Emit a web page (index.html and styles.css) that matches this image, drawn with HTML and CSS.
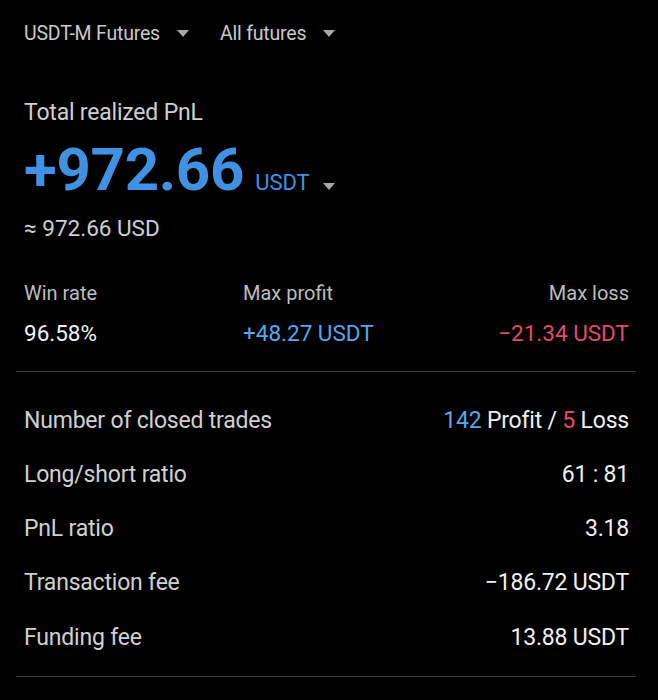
FILE: index.html
```html
<!DOCTYPE html>
<html lang="en">
<head>
<meta charset="utf-8">
<title>PnL Analysis</title>
<link rel="stylesheet" href="styles.css">
</head>
<body>
<div class="page">
  <div class="filters">
    <div class="filter">USDT-M Futures <span class="caret"></span></div>
    <div class="filter">All futures <span class="caret"></span></div>
  </div>

  <section class="summary">
    <div class="summary-title">Total realized PnL</div>
    <div class="pnl">
      <span class="pnl-value">+972.66</span>
      <span class="pnl-unit">USDT</span>
      <span class="caret caret-unit"></span>
    </div>
    <div class="pnl-usd">≈ 972.66 USD</div>
  </section>

  <section class="stats">
    <div class="stat">
      <div class="stat-label">Win rate</div>
      <div class="stat-value">96.58%</div>
    </div>
    <div class="stat">
      <div class="stat-label">Max profit</div>
      <div class="stat-value up">+48.27 USDT</div>
    </div>
    <div class="stat stat-right">
      <div class="stat-label">Max loss</div>
      <div class="stat-value down">−21.34 USDT</div>
    </div>
  </section>

  <section class="details">
    <div class="row"><span class="row-label">Number of closed trades</span><span class="row-value"><span class="up">142</span> Profit / <span class="down">5</span> Loss</span></div>
    <div class="row"><span class="row-label">Long/short ratio</span><span class="row-value">61 : 81</span></div>
    <div class="row"><span class="row-label">PnL ratio</span><span class="row-value">3.18</span></div>
    <div class="row"><span class="row-label">Transaction fee</span><span class="row-value">−186.72 USDT</span></div>
    <div class="row"><span class="row-label">Funding fee</span><span class="row-value">13.88 USDT</span></div>
  </section>
</div>
</body>
</html>
```

FILE: styles.css
```css
html, body {
  margin: 0;
  padding: 0;
  background: #000;
}

body {
  font-family: Roboto, "Noto Sans", "Liberation Sans", sans-serif;
  color: #d8d8d8;
  width: 658px;
  height: 700px;
  overflow: hidden;
}

.page {
  padding: 0 22px 0 16px;
}

/* top dropdown filters */
.filters {
  display: flex;
  gap: 31px;
  padding: 20px 8px 0;
  height: 26px;
  align-items: center;
}

.filter {
  font-size: 19.5px;
  color: #c9c9c9;
  display: flex;
  align-items: center;
  gap: 17px;
  letter-spacing: -0.2px;
}

.caret {
  display: inline-block;
  width: 0;
  height: 0;
  border-left: 6.5px solid transparent;
  border-right: 6.5px solid transparent;
  border-top: 7px solid #a8a8a8;
}

/* total PnL block */
.summary {
  padding: 0 8px;
  margin-top: 53px;
}

.summary-title {
  font-size: 23px;
  color: #cfcfcf;
  line-height: 28px;
  letter-spacing: -0.2px;
}

.pnl {
  display: flex;
  align-items: baseline;
  margin-top: 13px;
  height: 60px;
}

.pnl-value {
  font-size: 60px;
  font-weight: 700;
  color: #3f91e4;
  line-height: 60px;
  letter-spacing: -0.3px;
}

.pnl-unit {
  font-size: 22px;
  color: #3f91e4;
  margin-left: 11px;
}

.caret-unit {
  margin-left: 13px;
  margin-bottom: 6px;
}

.pnl-usd {
  font-size: 22.5px;
  color: #cfcfcf;
  margin-top: 15px;
  line-height: 26px;
}

/* win rate / max profit / max loss */
.stats {
  display: grid;
  grid-template-columns: 219px 1fr 1fr;
  padding: 0 7px 25px 8px;
  margin-top: 40px;
  border-bottom: 1.5px solid #3a3a3a;
}

.stat-label {
  font-size: 20px;
  color: #bdbdbd;
  line-height: 24px;
}

.stat-value {
  font-size: 22.5px;
  color: #f2f2f2;
  margin-top: 15px;
  line-height: 26px;
}

.stat-right {
  text-align: right;
}

.up {
  color: #58a6ec;
}

.down {
  color: #e24a6c;
}

/* detail rows */
.details {
  padding: 21px 7px 12px 8px;
  border-bottom: 1.5px solid #3a3a3a;
}

.row {
  display: flex;
  justify-content: space-between;
  align-items: center;
  height: 54.25px;
  font-size: 23px;
  letter-spacing: -0.2px;
}

.row-label {
  color: #d0d0d0;
}

.row-value {
  color: #f0f0f0;
}
```
